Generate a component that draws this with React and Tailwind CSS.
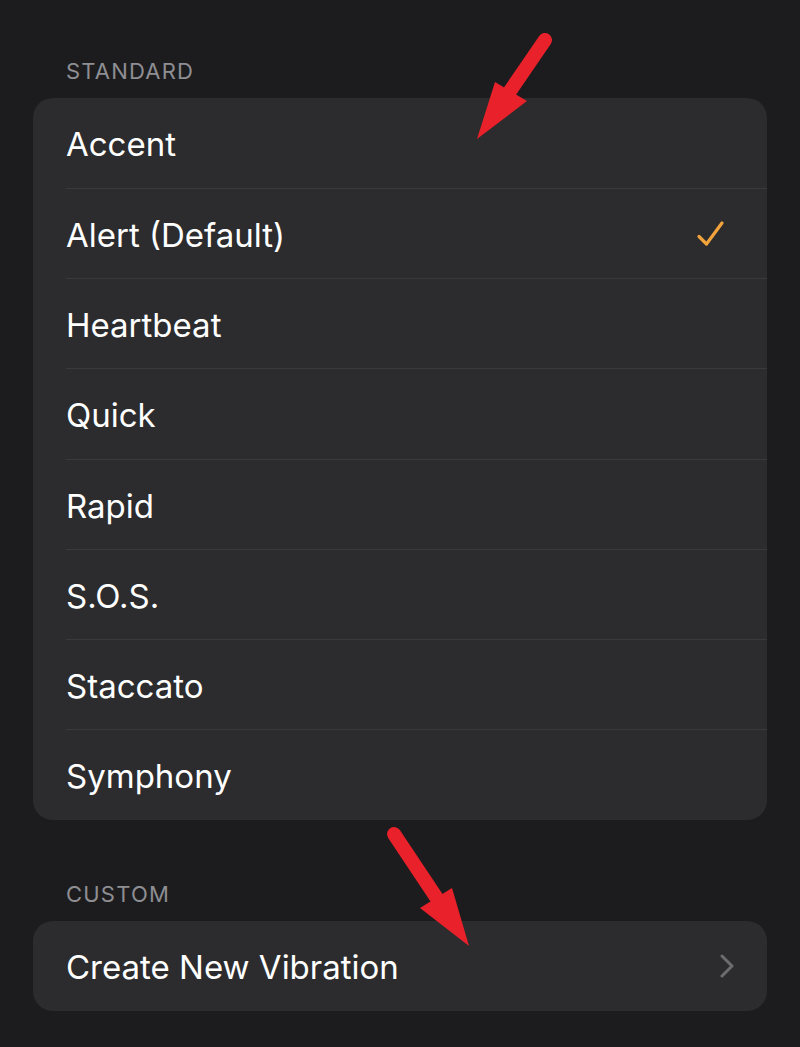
const standard = [
  "Accent",
  "Alert (Default)",
  "Heartbeat",
  "Quick",
  "Rapid",
  "S.O.S.",
  "Staccato",
  "Symphony",
];

const Check = () => (
  <svg width="32" height="32" viewBox="0 0 32 32" fill="none">
    <path d="M3 18.5 L10.5 26 L26 5" stroke="#f2a33c" strokeWidth="3.2" strokeLinecap="round" strokeLinejoin="round" />
  </svg>
);

const Chevron = () => (
  <svg width="16" height="24" viewBox="0 0 16 24" fill="none">
    <path d="M3 2 L13 12 L3 22" stroke="#6c6c70" strokeWidth="3" strokeLinecap="round" strokeLinejoin="round" />
  </svg>
);

const Arrows = () => (
  <svg className="absolute inset-0 pointer-events-none" width="800" height="1047" viewBox="0 0 800 1047">
    <line x1="545" y1="40" x2="508" y2="94" stroke="#e8212b" strokeWidth="14" strokeLinecap="round" />
    <polygon points="495,82 527,101 477,139" fill="#e8212b" />
    <line x1="394" y1="834" x2="438" y2="900" stroke="#e8212b" strokeWidth="14" strokeLinecap="round" />
    <polygon points="420,908 452,888 469,946" fill="#e8212b" />
  </svg>
);

export default function App() {
  return (
    <div className="relative min-h-screen w-[800px] h-[1047px] bg-[#1c1c1e] px-[33px] pt-[56px] font-['Inter',sans-serif] overflow-hidden">
      <p className="pl-[33px] text-[22px] leading-[30px] text-[#8e8e93] tracking-[1.2px]">STANDARD</p>
      <div className="mt-[12px] rounded-[20px] bg-[#2c2c2e] overflow-hidden">
        {standard.map((name, i) => (
          <div key={name} className="pl-[33px]">
            <div className={`flex items-center justify-between pr-[39px] ${i === 0 || i === 3 ? "h-[91px]" : "h-[90px]"} ${i < standard.length - 1 ? "border-b border-[#3a3a3c]" : ""}`}>
              <span className="pt-[4px] text-[33px] text-white">{name}</span>
              {i === 1 && <Check />}
            </div>
          </div>
        ))}
      </div>
      <p className="mt-[59px] pl-[33px] text-[22px] leading-[30px] text-[#8e8e93] tracking-[1.2px]">CUSTOM</p>
      <div className="mt-[12px] rounded-[20px] bg-[#2c2c2e] pl-[33px]">
        <div className="h-[90px] flex items-center justify-between pr-[32px]">
          <span className="pt-[4px] text-[33px] text-white">Create New Vibration</span>
          <Chevron />
        </div>
      </div>
      <Arrows />
    </div>
  );
}
